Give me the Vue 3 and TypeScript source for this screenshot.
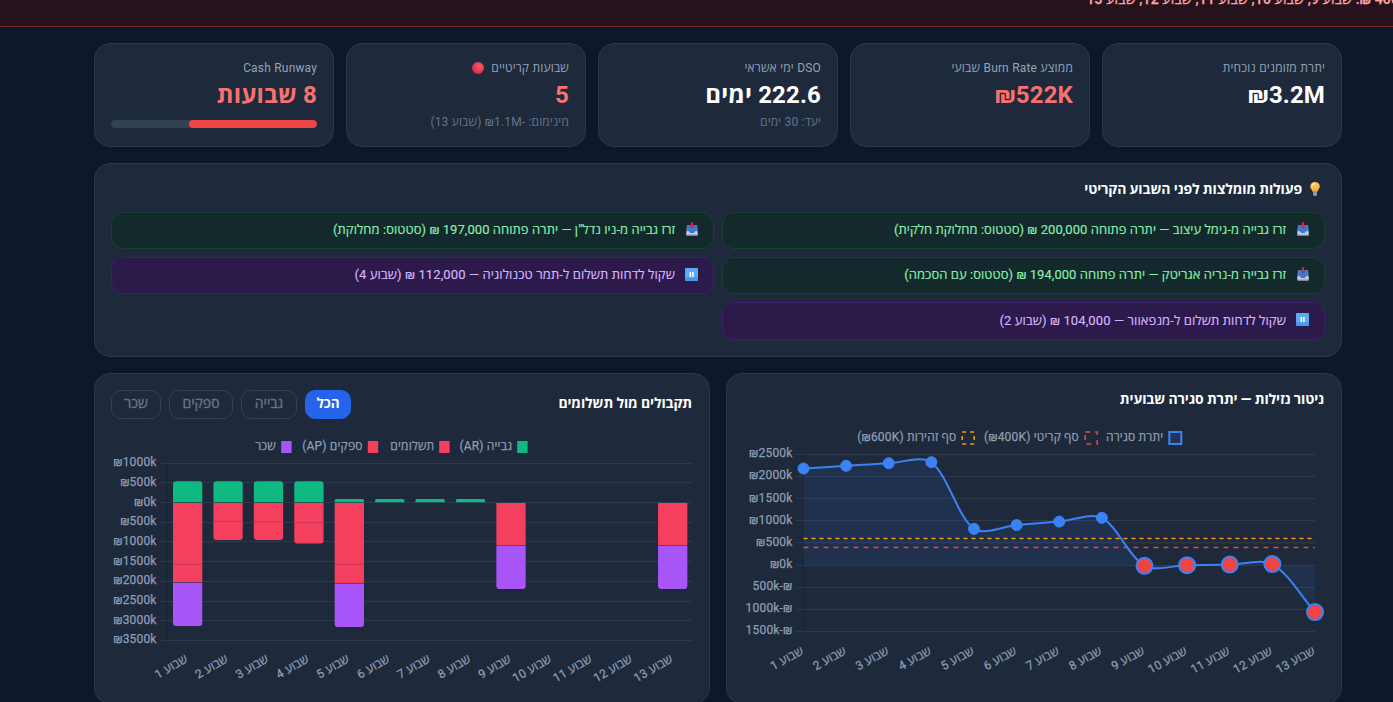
<script setup lang="ts">
interface Point { x: number; y: number }
interface Kpi { label: string; value: string; tone: string; sub?: string; dot?: boolean; progress?: number }

const kpis: Kpi[] = [
  { label: 'יתרת מזומנים נוכחית', value: '₪3.2M', tone: 'white' },
  { label: 'ממוצע Burn Rate שבועי', value: '₪522K', tone: 'red' },
  { label: 'DSO ימי אשראי', value: '222.6 ימים', tone: 'white', sub: 'יעד: 30 ימים' },
  { label: 'שבועות קריטיים', value: '5', tone: 'red', sub: 'מינימום: -₪1.1M (שבוע 13)', dot: true },
  { label: 'Cash Runway', value: '8 שבועות', tone: 'red', progress: 62 },
]

const actions = [
  { kind: 'collect', text: 'זרז גבייה מ-גימל עיצוב — יתרה פתוחה 200,000 ₪ (סטטוס: מחלוקת חלקית)' },
  { kind: 'collect', text: 'זרז גבייה מ-ניו נדל"ן — יתרה פתוחה 197,000 ₪ (סטטוס: מחלוקת)' },
  { kind: 'collect', text: 'זרז גבייה מ-נריה אגריטק — יתרה פתוחה 194,000 ₪ (סטטוס: עם הסכמה)' },
  { kind: 'delay', text: 'שקול לדחות תשלום ל-תמר טכנולוגיה — 112,000 ₪ (שבוע 4)' },
  { kind: 'delay', text: 'שקול לדחות תשלום ל-מנפאוור — 104,000 ₪ (שבוע 2)' },
]

const filters = [
  { id: 'all', label: 'הכל' },
  { id: 'ar', label: 'גבייה' },
  { id: 'ap', label: 'ספקים' },
  { id: 'pay', label: 'שכר' },
]

const weeks = Array.from({ length: 13 }, (_, i) => `שבוע ${i + 1}`)

/* Liquidity line chart */
const lineArea = { left: 76.5, right: 588, top: 80.5, bottom: 257.5, zero: 191.2 }
const lineGrid = [80.5, 102.5, 124.5, 146.5, 168.5, 191.5, 213.5, 235.5, 257.5]
const lineLabels = ['₪2500k', '₪2000k', '₪1500k', '₪1000k', '₪500k', '₪0k', '500k-₪', '1000k-₪', '1500k-₪']
const lineYs = [94.5, 91.8, 89.2, 88.2, 154.9, 151.1, 147.6, 143.8, 191.8, 191.2, 190.6, 190.1, 238.1]
const points: Point[] = lineYs.map((y, i) => ({ x: lineArea.left + (i * (lineArea.right - lineArea.left)) / 12, y }))

const smoothPath = (pts: Point[], tension: number): string => {
  const ctrl = pts.map((p, i) => {
    const prev = pts[i - 1] ?? p
    const next = pts[i + 1] ?? p
    const d1 = Math.hypot(p.x - prev.x, p.y - prev.y)
    const d2 = Math.hypot(next.x - p.x, next.y - p.y)
    const f1 = (tension * d1) / (d1 + d2)
    const f2 = (tension * d2) / (d1 + d2)
    return {
      a: { x: p.x - f1 * (next.x - prev.x), y: p.y - f1 * (next.y - prev.y) },
      b: { x: p.x + f2 * (next.x - prev.x), y: p.y + f2 * (next.y - prev.y) },
    }
  })
  return pts.reduce((d, p, i) => {
    if (i === 0) return `M${p.x} ${p.y}`
    const { b } = ctrl[i - 1]
    const { a } = ctrl[i]
    return `${d}C${b.x} ${b.y} ${a.x} ${a.y} ${p.x} ${p.y}`
  }, '')
}
const linePath = smoothPath(points, 0.3)
const areaPath = `${linePath}L${lineArea.right} ${lineArea.zero}L${lineArea.left} ${lineArea.zero}Z`

/* Receipts vs. payments bar chart */
const barGrid = [89.5, 108.5, 128.5, 148.5, 167.5, 187.5, 207.5, 227.5, 246.5, 266.5]
const barLabels = ['₪1000k', '₪500k', '₪0k', '₪500k', '₪1000k', '₪1500k', '₪2000k', '₪2500k', '₪3000k', '₪3500k']
const bars: { ar?: number; seam?: number; ap?: number; pay?: number }[] = [
  { ar: 107.2, seam: 190.3, ap: 208.2, pay: 252 },
  { ar: 107.2, seam: 147.5, ap: 166 },
  { ar: 107.2, seam: 147.8, ap: 166 },
  { ar: 107.2, seam: 148.6, ap: 169.4 },
  { ar: 125, seam: 190.4, ap: 209.5, pay: 253 },
  { ar: 125 },
  { ar: 125 },
  { ar: 125 },
  { ap: 171.5, pay: 215 },
  {}, {}, {},
  { ap: 171.5, pay: 215 },
]
const barX = (i: number): number => 78 + i * 40.42
const tickX = (i: number): number => 92.5 + i * 40.42
const roundTop = (x: number, y: number, b: number): string => {
  const r = Math.min(3, (b - y) / 2)
  return `M${x} ${b}V${y + r}Q${x} ${y} ${x + r} ${y}H${x + 29.3 - r}Q${x + 29.3} ${y} ${x + 29.3} ${y + r}V${b}Z`
}
const roundBottom = (x: number, y: number, b: number): string =>
  `M${x} ${y}V${b - 3}Q${x} ${b} ${x + 3} ${b}H${x + 26.3}Q${x + 29.3} ${b} ${x + 29.3} ${b - 3}V${y}Z`

const lineLegend = [
  { x: 442.3, textX: 436.3, label: 'יתרת סגירה', cls: 'lg-blue' },
  { x: 358.2, textX: 352, label: 'סף קריטי (₪400K)', cls: 'lg-red' },
  { x: 235.2, textX: 229.3, label: 'סף זהירות (₪600K)', cls: 'lg-amber' },
]
const barLegend = [
  { x: 423.2, textX: 417.2, label: 'גבייה (AR)', cls: 'f-green' },
  { x: 345.2, textX: 339.4, label: 'תשלומים', cls: 'f-red' },
  { x: 273.8, textX: 267.6, label: 'ספקים (AP)', cls: 'f-red' },
  { x: 187.2, textX: 181, label: 'שכר', cls: 'f-purple' },
]
</script>

<template>
  <div class="page" dir="rtl">
    <div class="alert"><span>400K ₪: שבוע 9, שבוע 10, שבוע 11, שבוע 12, שבוע 13</span></div>
    <main class="content">
      <section class="kpis">
        <article v-for="k in kpis" :key="k.label" class="card kpi">
          <div class="kpi-label">
            <span>{{ k.label }}</span>
            <svg v-if="k.dot" class="dot" viewBox="0 0 12 12">
              <defs>
                <radialGradient id="ball" cx=".6" cy=".35" r=".75">
                  <stop offset="0" stop-color="#fb5566" /><stop offset=".55" stop-color="#e83b52" /><stop offset="1" stop-color="#ac2c45" />
                </radialGradient>
              </defs>
              <circle cx="6" cy="6" r="6" fill="url(#ball)" />
            </svg>
          </div>
          <div class="kpi-value" :class="k.tone">{{ k.value }}</div>
          <div v-if="k.sub" class="kpi-sub">{{ k.sub }}</div>
          <div v-if="k.progress" class="track"><div class="fill" :style="{ width: k.progress + '%' }"></div></div>
        </article>
      </section>

      <section class="card actions">
        <h2>
          <svg class="bulb" viewBox="0 0 12 14">
            <path d="M6 0C3.1 0 1.2 2 1.2 4.6 1.2 6.6 3.1 7.7 3.7 9.8H8.3C8.9 7.7 10.8 6.6 10.8 4.6 10.8 2 8.9 0 6 0Z" fill="#fbbf4b" />
            <path d="M3.2 4Q3.8 1.8 6 1.6" stroke="#ffe9a8" stroke-width="1.5" fill="none" />
            <path d="M5.2 9.5 4.7 6M6.8 9.5 7.3 6" stroke="#e28a2e" stroke-width=".6" />
            <path d="M4.1 9.8H7.9V12.4L7.1 14H4.9L4.1 12.4Z" fill="#a294a4" />
          </svg>
          <span>פעולות מומלצות לפני השבוע הקריטי</span>
        </h2>
        <div class="action-grid">
          <div v-for="a in actions" :key="a.text" class="action" :class="a.kind">
            <svg v-if="a.kind === 'collect'" class="act-icon" viewBox="0 0 12 14">
              <path d="M1 3.4H11L11.5 9V13H.5V9Z" fill="#b9b0cf" />
              <path d="M1.2 3.6H10.8V9.2H8.9L7.9 10.9H4.1L3.1 9.2H1.2Z" fill="#2b7fd6" />
              <path d="M.5 9.6H2.9L3.9 11.1H8.1L9.1 9.6H11.5V13.4H.5Z" fill="#d0cadf" />
              <path d="M.5 12.4H11.5V13.4H.5Z" fill="#9d93b5" />
              <path d="M5 .3H7V4H8.6L6 6.8 3.4 4H5Z" fill="#e0204f" />
            </svg>
            <svg v-else class="act-icon wide" viewBox="0 0 13 13">
              <rect width="13" height="13" rx="1" fill="#5aaaf8" />
              <path d="M0 9H13V12Q13 13 12 13H1Q0 13 0 12Z" fill="#438fe8" opacity=".7" />
              <path d="M5.3 4V9.2M7.9 4V9.2" stroke="#fff" stroke-width="1.5" />
            </svg>
            <span>{{ a.text }}</span>
          </div>
        </div>
      </section>

      <section class="charts">
        <article class="card chart">
          <header><h2>ניטור נזילות — יתרת סגירה שבועית</h2></header>
          <svg class="plot" viewBox="0 0 614 328" direction="ltr">
            <g v-for="l in lineLegend" :key="l.label">
              <rect :x="l.x" y="58" width="12" height="12" :class="l.cls" />
              <text :x="l.textX" y="67" class="rtl">{{ l.label }}</text>
            </g>
            <path v-for="y in lineGrid" :key="y" :d="`M68.5 ${y}H588`" class="grid" />
            <path d="M76.5 80V258" class="axis" />
            <path :d="areaPath" class="area" />
            <path d="M76.5 164.5H588" class="amber" />
            <path d="M76.5 173.4H588" class="redline" />
            <path :d="linePath" class="line" />
            <circle v-for="(p, i) in points" :key="i" :cx="p.x" :cy="p.y" :r="i > 7 ? 8 : 5.5" :class="i > 7 ? 'critical' : 'normal'" />
            <text v-for="(t, i) in lineLabels" :key="t" x="65.5" :y="83.3 + i * 22.1" class="ylab">{{ t }}</text>
            <text v-for="(w, i) in weeks" :key="w" class="rtl" :transform="`translate(${points[i].x + 1} 279.2) rotate(-29)`">{{ w }}</text>
          </svg>
        </article>

        <article class="card chart">
          <header class="with-filters">
            <h2>תקבולים מול תשלומים</h2>
            <div class="filters">
              <button v-for="f in filters" :key="f.id" :class="[f.id, { active: f.id === 'all' }]">{{ f.label }}</button>
            </div>
          </header>
          <svg class="plot" viewBox="0 0 614 328" direction="ltr">
            <g v-for="l in barLegend" :key="l.label">
              <rect :x="l.x - 1" y="67" width="10.4" height="12" :class="l.cls" />
              <text :x="l.textX" y="76" class="rtl">{{ l.label }}</text>
            </g>
            <path v-for="y in barGrid" :key="y" :d="`M65 ${y}H597.5`" class="grid" />
            <path d="M72.5 89V267" class="axis" />
            <g v-for="(b, i) in bars" :key="i">
              <path v-if="b.ar" :d="roundTop(barX(i), b.ar, 128.2)" class="f-green" />
              <path v-if="b.ap && b.pay" :d="`M${barX(i)} 129H${barX(i) + 29.3}V${b.ap}H${barX(i)}Z`" class="f-red" />
              <path v-else-if="b.ap" :d="roundBottom(barX(i), 129, b.ap)" class="f-red" />
              <path v-if="b.seam" :d="`M${barX(i)} ${b.seam}h29.3`" class="seam" />
              <path v-if="b.pay" :d="roundBottom(barX(i), (b.ap ?? 0) + .6, b.pay)" class="f-purple" />
            </g>
            <text v-for="(t, i) in barLabels" :key="i" x="61.6" :y="92.3 + i * 19.67" class="ylab">{{ t }}</text>
            <text v-for="(w, i) in weeks" :key="w" class="rtl" :transform="`translate(${tickX(i) + 1.2} 287.2) rotate(-30)`">{{ w }}</text>
          </svg>
        </article>
      </section>
    </main>
  </div>
</template>

<style>
html, body { background: #0f172a; overflow: hidden; }
</style>

<style scoped>
* { box-sizing: border-box; }
.page { height: 702px; overflow: hidden; background: #0f172a; color: #fff; font-family: Roboto, "Open Sans", "Liberation Sans", sans-serif; }
.alert { height: 27px; background: #26121c; border-bottom: 1px solid #7f2630; color: #fca5a5; font-size: 14px; font-weight: 500; letter-spacing: .12px; line-height: 20px; overflow: hidden; -webkit-text-stroke: .25px #fca5a5; }
.alert span { display: block; margin: -11px -15px 0 0; white-space: nowrap; }
.content { padding: 16px 51px 0 94px; display: flex; flex-direction: column; gap: 16px; }
.card { background: #1e293b; border: 1px solid #2a384b; border-radius: 16px; }
.kpis { display: grid; grid-template-columns: repeat(5, 1fr); gap: 12px; }
.kpi { height: 104px; padding: 16px; white-space: nowrap; }
.kpi-label { display: flex; align-items: center; gap: 5px; font-size: 12px; line-height: 16px; letter-spacing: .15px; word-spacing: .3px; color: #94a3b8; }
.dot { width: 12px; height: 12px; margin-right: 2px; }
.kpi-value { font-size: 24px; font-weight: 700; line-height: 32px; margin-top: 3px; letter-spacing: .15px; }
.kpi-value.red { color: #f87171; }
.kpi-sub { font-size: 12px; line-height: 16px; margin-top: 3px; letter-spacing: .16px; color: #64748b; }
.track { height: 8px; margin-top: 9px; border-radius: 4px; background: #334155; overflow: hidden; }
.fill { height: 8px; border-radius: 4px; background: #ef4444; }
h2 { margin: 0; font-size: 14px; font-weight: 700; line-height: 20px; letter-spacing: -.13px; white-space: nowrap; }
.actions { height: 194px; padding: 16px; }
.actions h2 { display: flex; align-items: center; height: 18px; gap: 7px; line-height: 18px; }
.bulb { width: 12px; height: 14px; margin-right: 4px; }
.action-grid { display: grid; grid-template-columns: 1fr 1fr; gap: 8px; margin-top: 14px; grid-template-rows: 37px 37px 38px; }
.action { border: 1px solid; border-radius: 12px; padding: 0 15px 3px 12px; display: flex; align-items: center; gap: 11px; font-size: 13px; letter-spacing: .05px; white-space: nowrap; -webkit-text-stroke: .15px currentColor; }
.collect { background: #14292c; border-color: #14432f; color: #86efac; }
.delay { background: #2b1a4a; border-color: #451a72; color: #d8b4fe; letter-spacing: .1px; }
.act-icon { width: 12px; height: 14px; flex: none; }
.act-icon.wide { width: 13px; height: 13px; margin-left: -1px; }
.charts { display: grid; grid-template-columns: 1fr 1fr; gap: 16px; }
.chart { position: relative; height: 331px; }
header { position: absolute; inset: 15px 17px auto 16px; z-index: 1; }
.with-filters { display: flex; justify-content: space-between; align-items: center; top: 16px; height: 29px; }
.with-filters h2 { margin-top: -3px; }
.filters { display: flex; gap: 8px; }
.filters button { height: 29px; border-radius: 10px; border: 1px solid #334155; background: transparent; color: #64748b; font: 500 14px/24px Roboto, "Open Sans", sans-serif; padding: 0 0 4px; -webkit-text-stroke: .35px #64748b; }
.filters .all { width: 46px; }
.filters .ar { width: 56px; }
.filters .ap { width: 64px; }
.filters .pay { width: 50px; }
.filters .active { background: #2563eb; border-color: #2563eb; color: #fff; font-weight: 700; font-size: 13.5px; padding-bottom: 6px; -webkit-text-stroke: 0; }
.plot { display: block; width: 614px; height: 328px; }
.plot text { font-size: 12px; fill: #8f9db3; stroke: #8f9db3; stroke-width: .25px; letter-spacing: .18px; }
.rtl { direction: rtl; text-anchor: start; }
.ylab { direction: ltr; text-anchor: end; }
.grid { stroke: #2d394c; stroke-width: 1; }
.axis { stroke: #1a2434; stroke-width: 1; }
.area { fill: #3b82f6; fill-opacity: .1; }
.line { fill: none; stroke: #3b82f6; stroke-width: 2; }
.amber { stroke: #f59e0b; stroke-width: 1.5; stroke-dasharray: 4 4; }
.redline { stroke: #ef4444; stroke-width: 1.5; stroke-dasharray: 5 5; }
.normal { fill: #3b82f6; stroke: #3b82f6; }
.critical { fill: #ef4444; stroke: #3b82f6; stroke-width: 2; }
.lg-blue { fill: #22344f; stroke: #3b82f6; stroke-width: 2; }
.lg-red { fill: none; stroke: #ef4444; stroke-width: 1.5; stroke-dasharray: 5 5; }
.lg-amber { fill: none; stroke: #f59e0b; stroke-width: 1.5; stroke-dasharray: 4 4; }
.f-green { fill: #10b981; }
.f-red { fill: #f43f5e; }
.f-purple { fill: #a855f7; }
.seam { stroke: #c93a55; stroke-width: 1; }
</style>
